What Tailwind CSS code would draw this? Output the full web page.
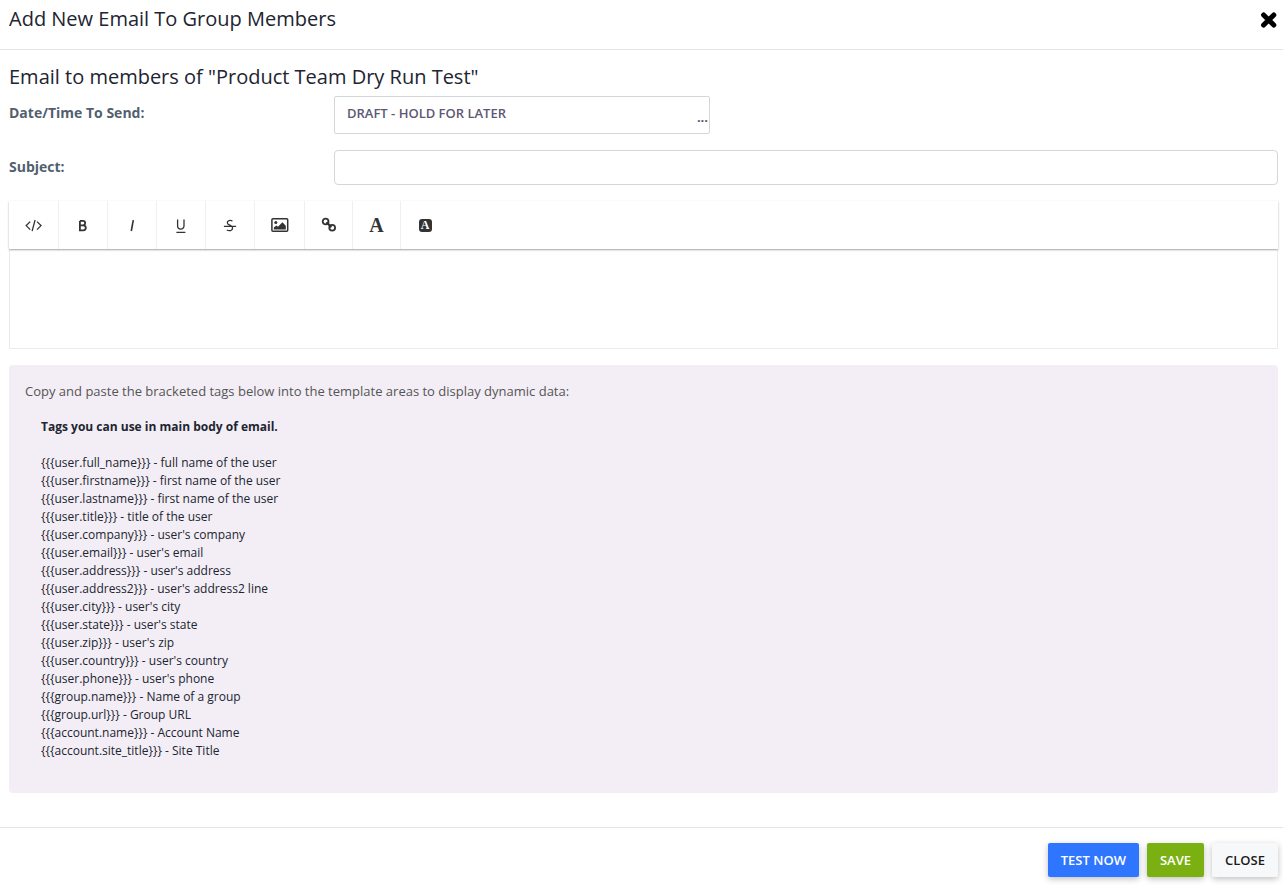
<!DOCTYPE html>
<html lang="en">
<head>
<meta charset="utf-8">
<meta name="viewport" content="width=device-width, initial-scale=1">
<title>Add New Email To Group Members</title>
<script src="https://cdn.jsdelivr.net/npm/@tailwindcss/browser@4"></script>
</head>
<body class="bg-white font-['Open_Sans',sans-serif] text-[#212431]">
<header class="flex h-[50px] items-start justify-between border-b border-[#e5e5e5] pt-1 pr-1.5 pl-[9px]">
  <h1 class="text-xl leading-[30px]">Add New Email To Group Members</h1>
  <button type="button" aria-label="Close dialog" class="pt-2">
    <svg class="size-4" viewBox="0 0 16 16" fill="none" stroke="#000" stroke-width="5" stroke-linecap="round"><path d="M2.6 2.9 12.8 13.1M12.8 2.9 2.6 13.1"/></svg>
  </button>
</header>

<main class="pt-3 pr-[5px] pb-[34px] pl-[9px]">
  <h2 class="text-xl leading-[30px]">Email to members of "Product Team Dry Run Test"</h2>
  <form>
    <div class="mt-1 flex items-start">
      <label for="send" class="w-[325px] shrink-0 pt-1.5 text-sm leading-[22px] font-bold text-[#525f70]">Date/Time To Send:</label>
      <div class="relative w-[376px]">
        <select id="send" class="block h-[38px] w-full appearance-none rounded-xs border border-[#d5d6d7] bg-white pr-6 pb-0.5 pl-3 text-[13px] font-semibold text-[#5e5873]">
          <option>DRAFT - HOLD FOR LATER</option>
        </select>
        <span class="pointer-events-none absolute right-[2px] bottom-2 text-[13px] leading-[18px] font-bold text-[#5e5873]">...</span>
      </div>
    </div>
    <div class="mt-4 flex items-start">
      <label for="subject" class="w-[325px] shrink-0 pt-1.5 text-sm leading-[22px] font-bold text-[#525f70]">Subject:</label>
      <input id="subject" type="text" class="h-[35px] min-w-0 flex-1 rounded-sm border border-[#d5d6d7] px-3 text-sm">
    </div>

    <div class="mt-4">
      <div role="toolbar" aria-label="Formatting" class="relative flex h-12 bg-white text-[#333] shadow-[0_1px_2px_rgba(0,0,0,0.3)] [&>button]:flex [&>button]:items-center [&>button]:justify-center [&>button]:border-r [&>button]:border-[#f0f0f0]">
        <button type="button" aria-label="HTML" class="w-[50px]">
          <svg class="h-4 w-[18px]" viewBox="0 0 18 16" fill="none" stroke="currentColor" stroke-width="1.3"><path d="M5.2 4.6 1.2 8.6l4 4M12 4.6l4 4-4 4M10.1 3 7.1 14.2"/></svg>
        </button>
        <button type="button" aria-label="Bold" class="w-[49px]">
          <svg class="size-4" viewBox="0 0 16 16" fill="none" stroke="currentColor" stroke-width="1.8"><path d="M4.9 3.9h3c3 0 3 4.4 0 4.4h-3h3.3c3.5 0 3.5 5 0 5H4.9V3.9"/></svg>
        </button>
        <button type="button" aria-label="Italic" class="w-[49px]">
          <svg class="size-4" viewBox="0 0 16 16" fill="none" stroke="currentColor" stroke-width="1.6"><path d="M9.3 3.1 7.3 14"/></svg>
        </button>
        <button type="button" aria-label="Underline" class="w-[49px]">
          <svg class="size-4" viewBox="0 0 16 16" fill="none" stroke="currentColor" stroke-width="1.3"><path d="M4.6 2.6v6.2c0 4.4 6.4 4.4 6.4 0V2.6M3.4 15.4h9"/></svg>
        </button>
        <button type="button" aria-label="Strikethrough" class="w-[49px]">
          <svg class="size-4" viewBox="0 0 16 16" fill="none" stroke="currentColor" stroke-width="1.3"><path d="M10.5 4C8.3 2.9 5.3 3.4 5.3 5.8c0 2.9 5.3 1.9 5.3 5.1 0 3-3.6 3.3-5.8 2.1M1.9 9.3h12.2"/></svg>
        </button>
        <button type="button" aria-label="Image" class="w-[50px]">
          <svg class="h-[14px] w-[18px]" viewBox="0 0 18 14"><rect x=".9" y=".8" width="15.8" height="12.4" rx="1" fill="none" stroke="currentColor" stroke-width="1.5"/><circle cx="4.8" cy="4.6" r="1.5" fill="currentColor"/><path fill="currentColor" d="M2.8 11.6V9.6l2.6-2.2 1.6 1.4 4.4-4.6 3.4 3.6v3.8z"/></svg>
        </button>
        <button type="button" aria-label="Link" class="w-12">
          <svg class="size-4" viewBox="0 0 16 16" fill="none" stroke="currentColor" stroke-width="1.8"><circle cx="4.6" cy="4.5" r="2.9"/><circle cx="11.2" cy="10.8" r="2.9"/><path stroke-width="2.2" d="m5.4 5.3 5 4.8"/></svg>
        </button>
        <button type="button" aria-label="Font color" class="w-12 font-['Liberation_Serif',serif] text-xl font-bold">A</button>
        <button type="button" aria-label="Highlight color" class="w-12 border-r-0!">
          <span class="flex h-[13px] w-[13px] items-center justify-center rounded-[3px] bg-[#333] font-['Liberation_Serif',serif] text-xs font-bold text-white">A</span>
        </button>
      </div>
      <textarea aria-label="Email body" class="block h-[100px] w-full resize-none border border-[#ebebeb] p-4 text-sm"></textarea>
    </div>
  </form>

  <section class="mt-4 rounded-sm bg-[#f3eef5] px-4 pt-4 pb-[33px]">
    <p class="text-[13px] leading-5 text-[#555]">Copy and paste the bracketed tags below into the template areas to display dynamic data:</p>
    <div class="mt-[17px] pl-4 text-xs leading-[18px]">
      <p class="font-bold">Tags you can use in main body of email.</p>
      <ul class="mt-[18px]">
        <li>{{{user.full_name}}} - full name of the user</li>
        <li>{{{user.firstname}}} - first name of the user</li>
        <li>{{{user.lastname}}} - first name of the user</li>
        <li>{{{user.title}}} - title of the user</li>
        <li>{{{user.company}}} - user's company</li>
        <li>{{{user.email}}} - user's email</li>
        <li>{{{user.address}}} - user's address</li>
        <li>{{{user.address2}}} - user's address2 line</li>
        <li>{{{user.city}}} - user's city</li>
        <li>{{{user.state}}} - user's state</li>
        <li>{{{user.zip}}} - user's zip</li>
        <li>{{{user.country}}} - user's country</li>
        <li>{{{user.phone}}} - user's phone</li>
        <li>{{{group.name}}} - Name of a group</li>
        <li>{{{group.url}}} - Group URL</li>
        <li>{{{account.name}}} - Account Name</li>
        <li>{{{account.site_title}}} - Site Title</li>
      </ul>
    </div>
  </section>
</main>

<footer class="flex justify-end gap-2 border-t border-[#e5e5e5] pt-[15px] pr-[5px] pb-2 text-[13px]">
  <button type="button" class="h-[34px] rounded-xs bg-[#2e76ff] px-[13px] pt-0.5 font-semibold text-white shadow-[0_2px_6px_rgba(0,0,0,0.25)]">TEST NOW</button>
  <button type="button" class="h-[34px] rounded-xs bg-[#7bb013] px-[13px] pt-0.5 font-semibold text-white shadow-[0_2px_6px_rgba(0,0,0,0.25)]">SAVE</button>
  <button type="button" class="h-[34px] rounded-xs bg-[#f7f8fa] px-[13px] pt-0.5 font-semibold text-[#1b1c20] shadow-[0_2px_6px_rgba(0,0,0,0.25)]">CLOSE</button>
</footer>
</body>
</html>
